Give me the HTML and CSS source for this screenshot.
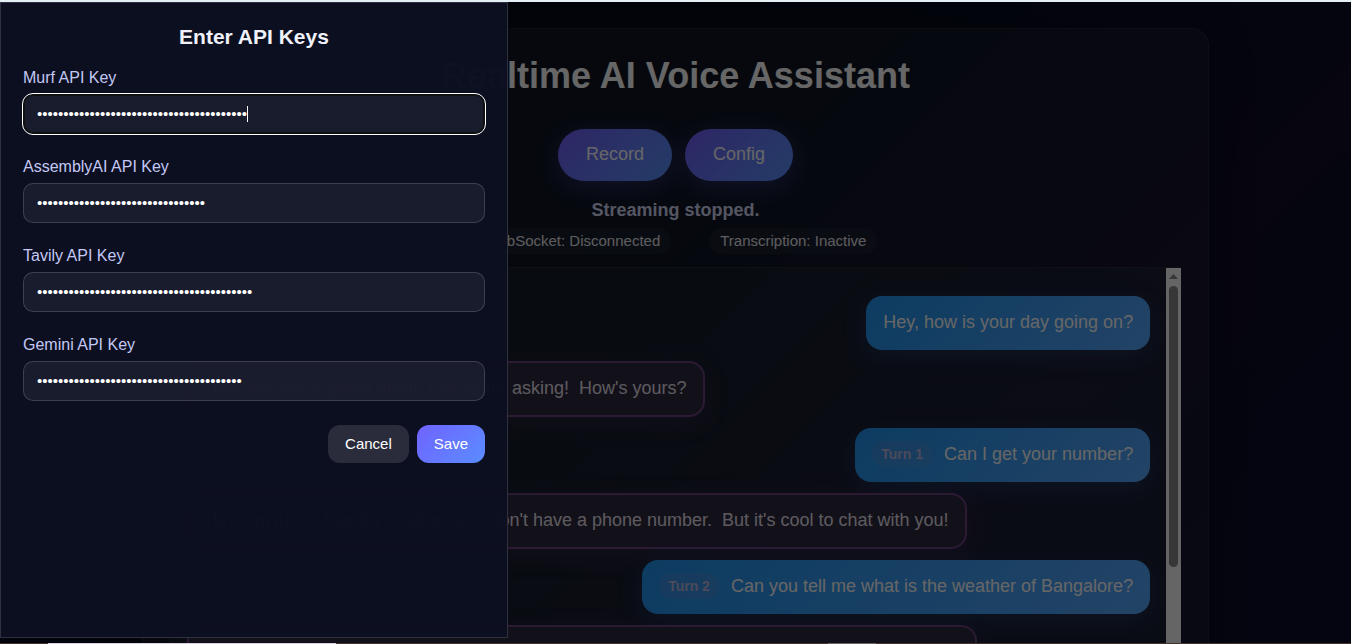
FILE: index.html
```html
<!DOCTYPE html>
<html lang="en">
<head>
<meta charset="utf-8">
<title>Realtime AI Voice Assistant</title>
<link rel="stylesheet" href="styles.css">
</head>
<body>
<div class="edge-top"></div>
<div class="stage">
  <main class="container">
    <h1 class="title">Realtime AI Voice Assistant</h1>
    <div class="controls">
      <button type="button" class="pill-btn">Record</button>
      <button type="button" class="pill-btn">Config</button>
    </div>
    <p class="status">Streaming stopped.</p>
    <div class="indicators">
      <span class="indicator">WebSocket: Disconnected</span>
      <span class="indicator">Transcription: Inactive</span>
    </div>
    <section class="chat" aria-label="Conversation">
      <div class="messages">
        <div class="msg user">Hey, how is your day going on?</div>
        <div class="msg bot">Hey! My day is going great, thanks for asking!  How's yours?</div>
        <div class="msg user"><span class="turn">Turn 1</span>Can I get your number?</div>
        <div class="msg bot">Hey! I'm just a friendly chatbot, so I don't have a phone number.  But it's cool to chat with you!</div>
        <div class="msg user"><span class="turn">Turn 2</span>Can you tell me what is the weather of Bangalore?</div>
        <div class="msg bot pending"></div>
      </div>
      <div class="scrollbar" aria-hidden="true">
        <svg class="arrow" viewBox="0 0 15 18" width="15" height="18"><path d="M3 11 L7.5 6 L12 11 Z" fill="#8b8b8b"/></svg>
        <div class="thumb"></div>
      </div>
    </section>
  </main>
  <div class="overlay">
    <form class="drawer" role="dialog" aria-labelledby="drawer-title">
      <h2 class="drawer-title" id="drawer-title">Enter API Keys</h2>
      <div class="field">
        <label for="murf">Murf API Key</label>
        <div class="input-wrap">
          <input id="murf" type="password" autofocus value="0000000000000000000000000000000000000000">
          <span class="caret"></span>
        </div>
      </div>
      <div class="field">
        <label for="assembly">AssemblyAI API Key</label>
        <input id="assembly" type="password" value="00000000000000000000000000000000">
      </div>
      <div class="field">
        <label for="tavily">Tavily API Key</label>
        <input id="tavily" type="password" value="00000000000000000000000000000000000000000">
      </div>
      <div class="field">
        <label for="gemini">Gemini API Key</label>
        <input id="gemini" type="password" value="000000000000000000000000000000000000000">
      </div>
      <div class="actions">
        <button type="button" class="btn cancel">Cancel</button>
        <button type="button" class="btn save">Save</button>
      </div>
    </form>
  </div>
</div>
<div class="edge-bottom"><span class="tab-light"></span><span class="tab-dim"></span></div>
</body>
</html>
```
FILE: styles.css
```css
* { box-sizing: border-box; }

body {
  margin: 0;
  height: 100vh;
  display: flex;
  flex-direction: column;
  overflow: hidden;
  background: #05060f;
  color: #fff;
  font-family: "Liberation Sans", Arial, sans-serif;
}

button, input { font-family: inherit; }

.edge-top {
  flex: none;
  height: 2px;
  background: #e4f0f6;
}

.edge-bottom {
  flex: none;
  display: grid;
  grid-template-columns: 48px 288px 492px 48px;
  height: 1px;
  background: #40342f;
}
.tab-light { grid-column: 2; background: #d8d0dc; }
.tab-dim { grid-column: 4; background: #6c6464; }

.stage {
  position: relative;
  flex: 1;
  min-height: 0;
  overflow: hidden;
  background: linear-gradient(135deg, #070b1a 0%, #060d1d 45%, #0f0d28 72%, #0a0e28 100%);
}

/* Main page */
.container {
  width: 79%;
  margin: 26px auto 0;
  padding: 26px 27px;
  border: 1px solid rgba(255, 255, 255, 0.06);
  border-radius: 18px;
  background: rgba(255, 255, 255, 0.04);
  box-shadow: 0 8px 40px rgba(0, 0, 0, 0.35);
}

.title {
  margin: 0 0 32px;
  font-size: 36px;
  line-height: 42px;
  text-align: center;
}

.controls {
  display: flex;
  justify-content: center;
  gap: 13px;
}

.pill-btn {
  height: 52px;
  padding: 0 28px 2px;
  border: 0;
  border-radius: 26px;
  background: linear-gradient(135deg, #7360ff, #5a96ff);
  box-shadow: 0 6px 24px rgba(108, 99, 255, 0.3);
  color: #fff;
  font-size: 18px;
}

.status {
  margin: 17px 0 6px;
  color: #d2d6f5;
  font-size: 18px;
  font-weight: 700;
  line-height: 24px;
  text-align: center;
}

.indicators {
  display: flex;
  justify-content: center;
  gap: 38px;
  margin-bottom: 13px;
}

.indicator {
  padding: 0 11px;
  border-radius: 13px;
  background: rgba(255, 255, 255, 0.04);
  color: #e8e8ec;
  font-size: 15px;
  line-height: 26px;
}

.chat {
  display: flex;
  height: 480px;
  border: 1px solid rgba(255, 255, 255, 0.05);
  border-right: 0;
  border-radius: 16px 0 0 16px;
  background: rgba(40, 56, 60, 0.25);
}

.messages {
  flex: 1;
  display: flex;
  flex-direction: column;
  align-items: flex-start;
  gap: 11px;
  min-width: 0;
  padding: 28px 16px 0;
}

.msg {
  flex: none;
  border-radius: 16px;
  font-size: 18px;
  line-height: 26px;
  white-space: pre-wrap;
}

.user {
  display: flex;
  align-self: flex-end;
  align-items: center;
  padding: 13px 17px 15px;
  background: linear-gradient(135deg, #2196f3, #56a8ff);
  box-shadow: 0 6px 24px rgba(60, 140, 255, 0.2);
}

.bot {
  padding: 12px 16px 14px;
  border: 2px solid #6e4184;
  background: #2f2840;
  box-shadow: 0 6px 24px rgba(130, 70, 160, 0.2);
  color: #e6e2ec;
}

.pending {
  width: 82%;
  height: 56px;
}

.turn {
  margin-right: 12px;
  padding: 0 9px;
  border-radius: 13px;
  background: rgba(130, 140, 200, 0.2);
  color: #b9b8e0;
  font-size: 14px;
  font-weight: 700;
  line-height: 26px;
}

.scrollbar {
  flex: none;
  display: flex;
  flex-direction: column;
  align-items: center;
  width: 15px;
  background: #fcfcfc;
}
.arrow { flex: none; }
.thumb {
  width: 9px;
  height: 281px;
  border-radius: 5px;
  background: #8b8b8b;
}

/* Key entry drawer */
.overlay {
  position: absolute;
  inset: 0;
  padding-bottom: 5px;
  background: rgba(0, 0, 0, 0.6);
}

.drawer {
  display: flex;
  flex-direction: column;
  width: 508px;
  max-width: 100%;
  height: 100%;
  padding: 22px;
  border: 1px solid rgba(255, 255, 255, 0.14);
  background: rgba(12, 15, 33, 0.98);
}

.drawer-title {
  margin: 0 0 20px;
  color: #f0f1fa;
  font-size: 21px;
  line-height: 24px;
  text-align: center;
}

.field {
  display: flex;
  flex-direction: column;
  gap: 7px;
  margin-bottom: 24px;
}

.field label {
  color: #c3c8f5;
  font-size: 16px;
  line-height: 18px;
}

.input-wrap {
  position: relative;
  display: flex;
}

.field input {
  width: 100%;
  height: 40px;
  padding: 0 13px 2px;
  border: 1px solid rgba(255, 255, 255, 0.16);
  border-radius: 10px;
  background: rgba(255, 255, 255, 0.055);
  color: #fff;
  font-size: 15px;
  caret-color: transparent;
}

.field input:focus {
  border-color: #101010;
  outline: 1px solid #fff;
  box-shadow: inset 0 0 0 1px #101010;
}

.caret {
  position: absolute;
  top: 12px;
  left: 224px;
  width: 1px;
  height: 16px;
  background: #fff;
}

.actions {
  display: flex;
  justify-content: flex-end;
  gap: 8px;
}

.btn {
  height: 38px;
  padding: 0 17px 1px;
  border: 0;
  border-radius: 12px;
  color: #fff;
  font-size: 15px;
}
.cancel { background: #2b2c3b; }
.save { background: linear-gradient(135deg, #7063ff, #5a8dff); }
```
